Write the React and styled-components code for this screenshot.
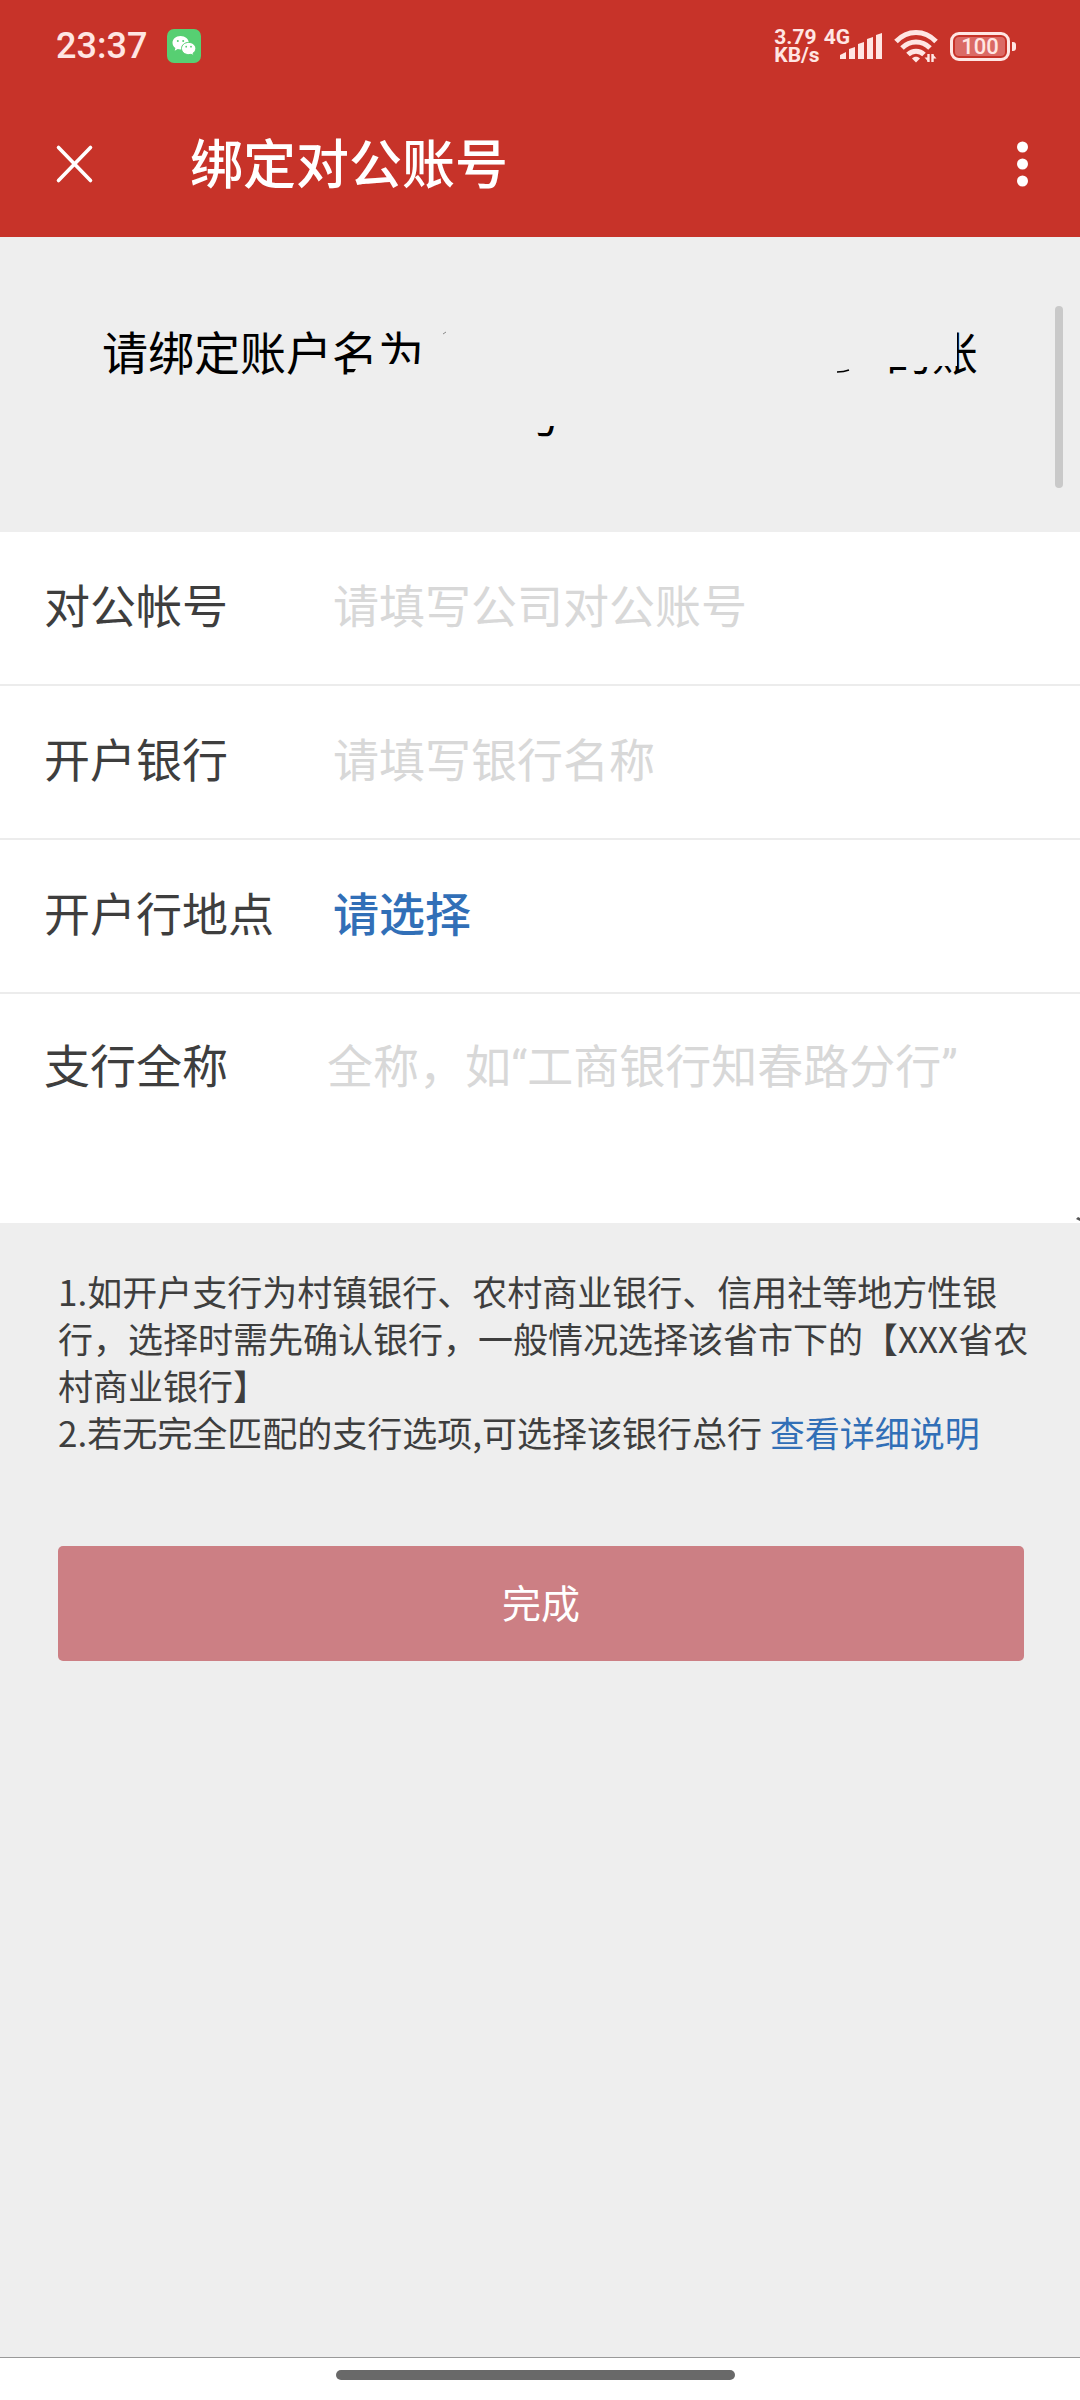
import React, {useState} from 'react';
import styled, {createGlobalStyle} from 'styled-components';


const GlobalStyle = createGlobalStyle`
* {
  box-sizing: border-box;
}
body {
  margin: 0;
  background: #eeeeee;
  color: #3e3e3e;
  font-family: Roboto, 'Noto Sans CJK SC', sans-serif;
}
button, input, select, textarea {
  font-family: inherit;
}
`;

const Page = styled.div`
display: flex;
flex-direction: column;
min-height: 100vh;
`;

const TopBar = styled.header`
background: #c73329;
color: #ffffff;
`;

const StatusBar = styled.div`
display: flex;
align-items: center;
justify-content: space-between;
height: 90px;
padding: 2px 64px 0 56px;
color: #ffe6e3;
`;

const StatusGroup = styled.div`
display: flex;
align-items: center;
gap: ${props => props.$gap}px;
`;

const Clock = styled.span`
font-size: 36px;
font-weight: 500;
line-height: 40px;
`;

const Speed = styled.div`
font-size: 21px;
font-weight: 700;
line-height: 18px;
`;

const Signal = styled.div`
display: flex;
align-items: flex-start;
font-size: 21px;
font-weight: 700;
line-height: 18px;
height: 36px;
`;

const SignalBars = styled.svg`
margin: 5px 0 0 -10px;
`;

const Battery = styled.div`
display: flex;
align-items: center;
gap: 2px;
`;

const BatteryBody = styled.span`
display: flex;
width: 60px;
height: 29px;
padding: 2px;
border: 3px solid #ffe6e3;
border-radius: 9px;
`;

const BatteryLevel = styled.span`
flex: 1;
border-radius: 4px;
background: #db6a65;
font-size: 22px;
font-weight: 500;
line-height: 19px;
text-align: center;
`;

const BatteryTip = styled.span`
width: 4px;
height: 9px;
border-radius: 0 3px 3px 0;
background: #ffe6e3;
`;

const NavBar = styled.div`
display: flex;
align-items: center;
height: 147px;
padding: 0 42px 0 48px;
`;

const Title = styled.h1`
flex: 1;
margin: 0 0 0 88px;
padding-top: 4px;
font-size: 53px;
font-weight: 500;
line-height: 64px;
`;

const IconButton = styled.button`
display: flex;
padding: 0;
border: none;
background: none;
color: inherit;
`;

const Content = styled.main`
position: relative;
flex: 1;
`;

const ScrollThumb = styled.span`
position: absolute;
top: 69px;
right: 17px;
width: 8px;
height: 182px;
border-radius: 4px;
background: #c9c9c9;
`;

const Notice = styled.section`
padding: 86px 102px 85px;
color: #000000;
font-size: 46px;
line-height: 62px;
`;

const NoticeLine = styled.div`
display: flex;
justify-content: ${props => props.$center ? 'center' : 'space-between'};
`;

const Glyph = styled.span`
position: relative;
display: inline-block;
width: 46px;
height: 62px;
vertical-align: top;
`;

const Cover = styled.svg`
position: absolute;
top: 0;
left: 0;
fill: #eeeeee;
`;

const Remnant = styled.svg`
flex: 1;
height: 62px;
`;

const Form = styled.form`
margin: 0;
`;

const Fields = styled.div`
position: relative;
background: #ffffff;
`;

const Field = styled.div`
display: flex;
align-items: ${props => props.$tall ? 'flex-start' : 'center'};
min-height: ${props => props.$tall ? 229 : 154}px;
padding: ${props => props.$tall ? '40px 0 0 44px' : '0 44px 2px'};
border-bottom: ${props => props.$tall ? 'none' : '2px solid #ececec'};
`;

const Label = styled.label`
flex: none;
width: ${props => props.$tall ? 283 : 289}px;
font-size: 46px;
line-height: 66px;
`;

const Input = styled.input`
flex: 1;
min-width: 0;
padding: 0;
border: none;
outline: none;
background: none;
color: #3e3e3e;
font-size: 46px;
line-height: 66px;
&::placeholder {
  color: #d8d8d8;
}
`;

const TextArea = styled(Input)`
height: 180px;
resize: none;
`;

const Select = styled.select`
flex: 1;
padding: 0;
border: none;
outline: none;
appearance: none;
background: none;
color: #316fb7;
font-size: 46px;
font-weight: 500;
line-height: 66px;
`;

const ResizeCorner = styled.svg`
position: absolute;
right: 0;
bottom: 2px;
`;

const Tips = styled.section`
padding: 44px 44px 91px 58px;
font-family: 'Noto Sans CJK SC', sans-serif;
font-size: 35px;
line-height: 47px;
`;

const Tip = styled.p`
margin: 0;
`;

const TipLink = styled.a`
color: #316fb7;
text-decoration: none;
`;

const Submit = styled.button`
display: block;
width: calc(100% - 114px);
height: 115px;
margin: 0 56px 0 58px;
padding: 0 0 6px;
border: none;
border-radius: 5px;
background: #cc7f84;
color: #ffffff;
font-size: 39px;
`;

const HomeBar = styled.footer`
display: flex;
justify-content: center;
height: 43px;
padding-top: 12px;
border-top: 1px solid #999999;
background: #ffffff;
`;

const HomePill = styled.span`
width: 37%;
height: 10px;
margin-right: 9px;
border-radius: 5px;
background: #696969;
`;


const WeChatIcon = () => (
  <svg width="34" height="34" viewBox="0 0 34 34">
    <rect width="34" height="34" rx="7" fill="#57cf72" />
    <path d="M13.5 7C8.800 7 5.500 10 5.500 13.800c0 2.200 1.100 4 2.900 5.200l-.7 2.700 3-1.600c.9.200 1.800.4 2.800.4 4.700 0 8.300-2.900 8.300-6.700S18.200 7 13.500 7z" fill="#fff" />
    <path d="M21.700 13.400c-4.100 0-7.200 2.700-7.200 6.100s3.100 6.100 7.200 6.100c.9 0 1.700-.1 2.400-.3l2.500 1.300-.6-2.300c1.700-1.100 2.800-2.800 2.800-4.800 0-3.400-3.100-6.100-7.100-6.100z" fill="#fff" stroke="#57cf72" />
    <circle cx="10.800" cy="12" r="1" fill="#57cf72" />
    <circle cx="16.200" cy="12" r="1" fill="#57cf72" />
    <circle cx="19.200" cy="17.700" r=".9" fill="#57cf72" />
    <circle cx="24" cy="17.700" r=".9" fill="#57cf72" />
  </svg>
)

const WifiIcon = () => (
  <svg width="44" height="33" viewBox="0 0 44 33" fill="none" stroke="#ffe6e3" strokeWidth="5">
    <path d="M2 11.500C13.500-.5 30.500-.5 42 11.500" />
    <path d="M8 18c8-8 20-8 28 0" />
    <path d="M14 24.500c4.500-4.500 11.500-4.500 16 0" />
    <path d="M22 32.500l-4-4c2-2.200 6-2.200 8 0z" fill="#ffe6e3" stroke="none" />
    <path d="M34.500 24v8M38.500 32v-8" strokeWidth="2.400" />
    <path d="M30.500 27.500l4 4.500v-4.500zM42.500 28.500l-4-4.500v4.500z" fill="#ffe6e3" stroke="none" />
  </svg>
)

const CloseIcon = () => (
  <svg width="54" height="54" viewBox="0 0 54 54" stroke="currentColor" strokeWidth="3.600" strokeLinecap="round">
    <path d="M10.500 10.500l32 33M42.500 10.500l-32 33" />
  </svg>
)

const MoreIcon = () => (
  <svg width="31" height="54" viewBox="0 0 31 54" fill="currentColor">
    <circle cx="15.500" cy="10" r="5.500" />
    <circle cx="15.500" cy="27" r="5.500" />
    <circle cx="15.500" cy="44" r="5.500" />
  </svg>
)

// a character with part of it rubbed out
const RubbedGlyph = ({char, erase}) => (
  <Glyph>
    {char}
    <Cover width="46" height="62" viewBox="0 0 46 62">
      <path d={erase} />
    </Cover>
  </Glyph>
)

const inputs = [
  {name: 'account', label: '对公帐号', placeholder: '请填写公司对公账号'},
  {name: 'bank', label: '开户银行', placeholder: '请填写银行名称'}
]

const App = () => {

  const [form, setForm] = useState({account: '', bank: '', place: '', branch: ''});

  const handleChange = e => {
    setForm(
      {
        ...form,
        [e.target.name]: e.target.value
      }
    )
  }

  const handleSubmit = e => {
    e.preventDefault();
  }

  return (
    <Page lang="zh-CN">
      <GlobalStyle />
      <TopBar>
        <StatusBar>
          <StatusGroup $gap={20}>
            <Clock>23:37</Clock>
            <WeChatIcon />
          </StatusGroup>
          <StatusGroup $gap={12}>
            <StatusGroup $gap={4}>
              <Speed>3.79<br />KB/s</Speed>
              <Signal>
                4G
                <SignalBars width="42" height="26" viewBox="0 0 42 26" fill="#ffe6e3">
                  <path d="M0 22l6-3v7H0zM9 16l6-2v12H9zM18 11l6-2v17h-6zM27 6l6-2v22h-6zM36 2l6-2v26h-6z" />
                </SignalBars>
              </Signal>
            </StatusGroup>
            <WifiIcon />
            <Battery>
              <BatteryBody><BatteryLevel>100</BatteryLevel></BatteryBody>
              <BatteryTip />
            </Battery>
          </StatusGroup>
        </StatusBar>
        <NavBar>
          <IconButton type="button" aria-label="关闭"><CloseIcon /></IconButton>
          <Title>绑定对公账号</Title>
          <IconButton type="button" aria-label="更多"><MoreIcon /></IconButton>
        </NavBar>
      </TopBar>

      <Content>
        <ScrollThumb />
        <Notice>
          <NoticeLine>
            <span>
              请绑定账户
              <RubbedGlyph char="名" erase="M46 41H27L19 54H46z" />
              <RubbedGlyph char="为" erase="M0 41H46V58H0z" />
            </span>
            <Remnant viewBox="0 0 460 62" fill="none" stroke="#000">
              <path d="M18 11l3-2" stroke="#888" />
              <path d="M412 49q7 0 12-2" strokeWidth="1.500" />
            </Remnant>
            <span>
              <RubbedGlyph char="的" erase="M0 0H46V44H0z" />
              <RubbedGlyph char="账" erase="M0 0H25V43H0z" />
            </span>
          </NoticeLine>
          <NoticeLine $center>
            <RubbedGlyph char="号" erase="M0 0H46V41H18V60H0z" />
          </NoticeLine>
        </Notice>

        <Form onSubmit={handleSubmit}>
          <Fields>
            {inputs.map(input => (
              <Field key={input.name}>
                <Label htmlFor={input.name}>{input.label}</Label>
                <Input type="text" id={input.name} name={input.name} value={form[input.name]} onChange={handleChange} placeholder={input.placeholder} />
              </Field>
            ))}
            <Field>
              <Label htmlFor="place">开户行地点</Label>
              <Select id="place" name="place" value={form.place} onChange={handleChange}>
                <option value="">请选择</option>
              </Select>
            </Field>
            <Field $tall>
              <Label htmlFor="branch" $tall>支行全称</Label>
              <TextArea as="textarea" id="branch" name="branch" value={form.branch} onChange={handleChange} placeholder="全称，如“工商银行知春路分行”" />
            </Field>
            <ResizeCorner width="4" height="4" viewBox="0 0 4 4">
              <path d="M0 2l2-2 2 1v3z" fill="#555" />
            </ResizeCorner>
          </Fields>

          <Tips>
            <Tip>1.如开户支行为村镇银行、农村商业银行、信用社等地方性银行，选择时需先确认银行，一般情况选择该省市下的【XXX省农村商业银行】</Tip>
            <Tip>2.若无完全匹配的支行选项,可选择该银行总行 <TipLink href="#detail">查看详细说明</TipLink></Tip>
          </Tips>

          <Submit type="submit">完成</Submit>
        </Form>
      </Content>

      <HomeBar>
        <HomePill />
      </HomeBar>
    </Page>
  )
}

export default App;
